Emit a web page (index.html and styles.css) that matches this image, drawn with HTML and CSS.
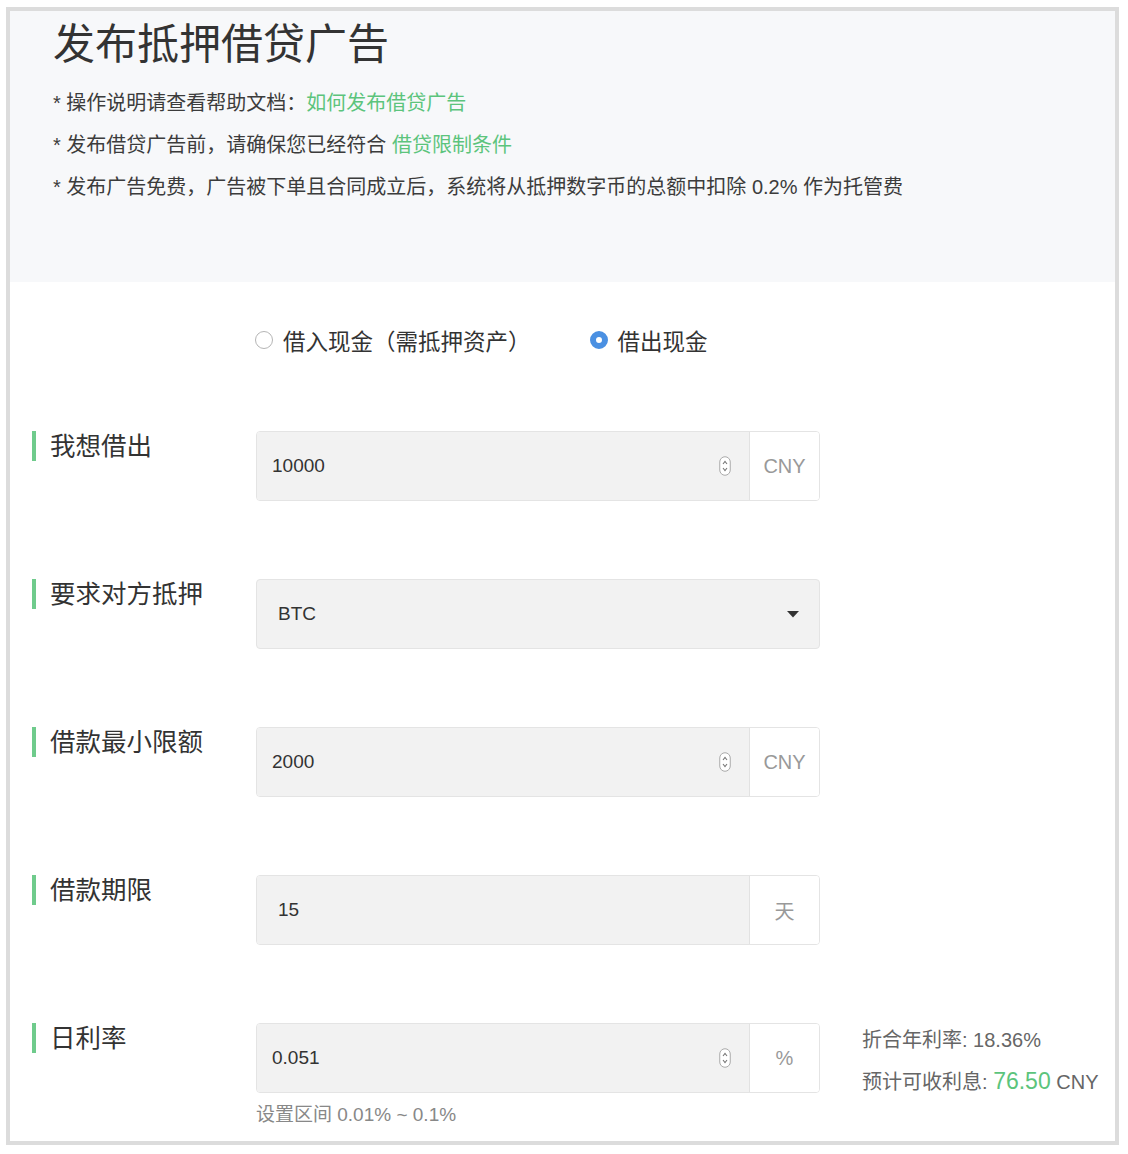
FILE: index.html
```html
<!DOCTYPE html>
<html lang="zh-CN">
<head>
    <meta charset="UTF-8">
    <title>发布抵押借贷广告</title>
    <link rel="stylesheet" href="styles.css">
</head>
<body>
    <div class="frame">
        <div class="notice">
            <h1 class="title">发布抵押借贷广告</h1>
            <p class="tip">* 操作说明请查看帮助文档：<a href="#" class="link">如何发布借贷广告</a></p>
            <p class="tip">* 发布借贷广告前，请确保您已经符合 <a href="#" class="link">借贷限制条件</a></p>
            <p class="tip">* 发布广告免费，广告被下单且合同成立后，系统将从抵押数字币的总额中扣除 0.2% 作为托管费</p>
        </div>

        <div class="form">
            <div class="radio-row">
                <label class="radio"><span class="dot"></span>借入现金（需抵押资产）</label>
                <label class="radio checked"><span class="dot"></span>借出现金</label>
            </div>

            <div class="row">
                <div class="label">我想借出</div>
                <div class="field">
                    <div class="group">
                        <div class="input">
                            <span>10000</span>
                            <svg class="spin" width="12" height="20" viewBox="0 0 12 20"><rect x="0.75" y="0.75" width="10.5" height="18.5" rx="5.25" fill="#fff" stroke="#aaa" stroke-width="1"/><path d="M4 8 L6 5.5 L8 8" fill="none" stroke="#777" stroke-width="1.1"/><path d="M4 12 L6 14.5 L8 12" fill="none" stroke="#777" stroke-width="1.1"/></svg>
                        </div>
                        <div class="addon">CNY</div>
                    </div>
                </div>
            </div>

            <div class="row">
                <div class="label">要求对方抵押</div>
                <div class="field">
                    <div class="select">
                        <span>BTC</span>
                        <svg width="12" height="7" viewBox="0 0 12 7"><path d="M0 0 L12 0 L6 6.5 Z" fill="#333"/></svg>
                    </div>
                </div>
            </div>

            <div class="row">
                <div class="label">借款最小限额</div>
                <div class="field">
                    <div class="group">
                        <div class="input">
                            <span>2000</span>
                            <svg class="spin" width="12" height="20" viewBox="0 0 12 20"><rect x="0.75" y="0.75" width="10.5" height="18.5" rx="5.25" fill="#fff" stroke="#aaa" stroke-width="1"/><path d="M4 8 L6 5.5 L8 8" fill="none" stroke="#777" stroke-width="1.1"/><path d="M4 12 L6 14.5 L8 12" fill="none" stroke="#777" stroke-width="1.1"/></svg>
                        </div>
                        <div class="addon">CNY</div>
                    </div>
                </div>
            </div>

            <div class="row">
                <div class="label">借款期限</div>
                <div class="field">
                    <div class="group">
                        <div class="input input-plain">
                            <span>15</span>
                        </div>
                        <div class="addon">天</div>
                    </div>
                </div>
            </div>

            <div class="row">
                <div class="label">日利率</div>
                <div class="field">
                    <div class="group">
                        <div class="input">
                            <span>0.051</span>
                            <svg class="spin" width="12" height="20" viewBox="0 0 12 20"><rect x="0.75" y="0.75" width="10.5" height="18.5" rx="5.25" fill="#fff" stroke="#aaa" stroke-width="1"/><path d="M4 8 L6 5.5 L8 8" fill="none" stroke="#777" stroke-width="1.1"/><path d="M4 12 L6 14.5 L8 12" fill="none" stroke="#777" stroke-width="1.1"/></svg>
                        </div>
                        <div class="addon">%</div>
                    </div>
                    <div class="hint">设置区间 0.01% ~ 0.1%</div>
                </div>
                <div class="info">
                    <p>折合年利率: 18.36%</p>
                    <p>预计可收利息: <span class="amount">76.50</span> CNY</p>
                </div>
            </div>
        </div>
    </div>
</body>
</html>
```

FILE: styles.css
```css
body {
    margin: 0;
    font-family: "Liberation Sans", "Noto Sans CJK SC", sans-serif;
    color: #333;
    background: #fff;
}
.frame {
    box-sizing: border-box;
    width: 1113px;
    height: 1138px;
    margin: 7px 0 0 6px;
    border: 4px solid #dcdcdc;
}
.notice {
    height: 271px;
    padding: 9px 0 0 43px;
    box-sizing: border-box;
    background: #f7f8fa;
}
.title {
    margin: 0 0 12px;
    font-size: 42px;
    line-height: 50px;
    font-weight: normal;
    color: #333;
}
.tip {
    margin: 0;
    font-size: 20px;
    line-height: 42px;
    color: #3c3c3c;
}
.link {
    color: #5cc47c;
    text-decoration: none;
}
.form {
    padding: 40px 0 0 22px;
}
.radio-row {
    display: flex;
    gap: 59px;
    height: 36px;
    padding-left: 223px;
    margin-bottom: 73px;
}
.radio {
    display: flex;
    align-items: center;
    gap: 10px;
    font-size: 22.5px;
    color: #333;
}
.dot {
    box-sizing: border-box;
    width: 18px;
    height: 18px;
    border-radius: 50%;
    border: 1px solid #b5b5b5;
    background: #fff;
}
.checked .dot {
    border: 6px solid #4a90e2;
    background: #fff;
}
.row {
    display: flex;
    height: 148px;
}
.label {
    width: 224px;
    box-sizing: border-box;
    height: 30px;
    padding-left: 14px;
    border-left: 4px solid #6fcb8c;
    font-size: 25.5px;
    line-height: 30px;
    color: #333;
}
.field {
    width: 564px;
}
.group {
    display: flex;
    height: 70px;
    border: 1px solid #e4e4e4;
    border-radius: 4px;
    box-sizing: border-box;
    overflow: hidden;
}
.input {
    flex: 1;
    display: flex;
    align-items: center;
    justify-content: space-between;
    padding: 0 18px 0 15px;
    background: #f2f2f2;
    border-right: 1px solid #e2e2e2;
    font-size: 19px;
    color: #333;
}
.input-plain {
    padding-left: 21px;
}
.spin {
    display: block;
}
.addon {
    width: 69px;
    display: flex;
    align-items: center;
    justify-content: center;
    font-size: 20px;
    color: #999;
    background: #fff;
}
.select {
    display: flex;
    align-items: center;
    justify-content: space-between;
    box-sizing: border-box;
    height: 70px;
    padding: 0 20px 0 21px;
    border: 1px solid #e4e4e4;
    border-radius: 4px;
    background: #f2f2f2;
    font-size: 19px;
    color: #333;
}
.hint {
    margin-top: 11px;
    font-size: 19px;
    line-height: 22px;
    color: #888;
}
.info {
    margin: -3px 0 0 42px;
}
.info p {
    margin: 0;
    font-size: 20px;
    line-height: 41px;
    color: #666;
}
.amount {
    font-size: 23px;
    color: #5cc47c;
}
```
